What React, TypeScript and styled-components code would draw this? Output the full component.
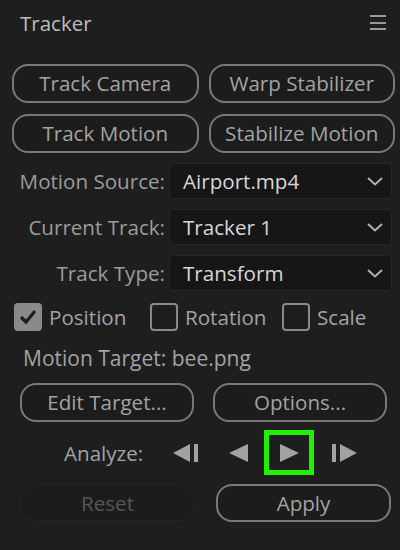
import React from "react";
import styled, { createGlobalStyle } from "styled-components";

const FS = 20.6;

const Global = createGlobalStyle`
  html, body { margin: 0; padding: 0; background: #1e1e1e; }
  body { font-family: "Open Sans", "Noto Sans", sans-serif; }
  * { box-sizing: border-box; }
`;

const Panel = styled.div`
  width: 400px;
  height: 550px;
  background: #1e1e1e;
  display: flex;
  flex-direction: column;
  overflow: hidden;
`;

const Header = styled.div`
  height: 46px;
  display: flex;
  align-items: center;
  justify-content: space-between;
  padding: 0 14px 0 20px;
`;

const Title = styled.div`
  font-size: 20.5px;
  color: #bdbdbd;
  line-height: 1;
`;

const Hamburger = styled.div`
  width: 16px;
  display: flex;
  flex-direction: column;
  gap: 4.5px;
  margin-top: -1px;
  span {
    display: block;
    height: 2px;
    background: #9a9a9a;
  }
`;

const ButtonGrid = styled.div<{ $top: number; $left: number; $right: number; $gap: number; $rowGap?: number }>`
  display: grid;
  grid-template-columns: 1fr 1fr;
  column-gap: ${(p) => p.$gap}px;
  row-gap: ${(p) => p.$rowGap ?? 0}px;
  margin-top: ${(p) => p.$top}px;
  padding: 0 ${(p) => p.$right}px 0 ${(p) => p.$left}px;
`;

const PillButton = styled.button<{ $h?: number; $disabled?: boolean }>`
  height: ${(p) => p.$h ?? 39}px;
  border: 2px solid ${(p) => (p.$disabled ? "#212121" : "#787878")};
  border-radius: 16px;
  background: #1c1c1c;
  color: ${(p) => (p.$disabled ? "#565656" : "#a3a3a3")};
  font-family: "Open Sans", "Noto Sans", sans-serif;
  font-size: ${FS}px;
  display: flex;
  align-items: center;
  justify-content: center;
  padding: 0;
  line-height: 1;
  white-space: nowrap;
`;

const Form = styled.div`
  display: grid;
  grid-template-columns: 1fr 223px;
  column-gap: 4px;
  row-gap: 10px;
  margin-top: 10px;
  padding-right: 8px;
`;

const Label = styled.div`
  font-size: ${FS}px;
  color: #9c9c9c;
  text-align: right;
  display: flex;
  align-items: center;
  justify-content: flex-end;
  white-space: nowrap;
`;

const Select = styled.div`
  height: 36px;
  background: #161616;
  border: 1px solid #262626;
  border-radius: 4px;
  display: flex;
  align-items: center;
  justify-content: space-between;
  padding: 0 8px 0 13px;
  font-size: ${FS}px;
  color: #d6d6d6;
`;

const CheckRow = styled.div`
  display: flex;
  align-items: center;
  margin-top: 12px;
  padding-left: 14px;
  height: 28px;
`;

const CheckItem = styled.label<{ $w: number }>`
  display: flex;
  align-items: center;
  gap: 7px;
  width: ${(p) => p.$w}px;
  font-size: ${FS}px;
  color: #a3a3a3;
`;

const Box = styled.span<{ $checked?: boolean }>`
  width: 28px;
  height: 28px;
  border-radius: 4px;
  flex: none;
  display: flex;
  align-items: center;
  justify-content: center;
  background: ${(p) => (p.$checked ? "#8a8a8a" : "transparent")};
  border: ${(p) => (p.$checked ? "none" : "2.5px solid #8a8a8a")};
`;

const TargetText = styled.div`
  margin-top: 14px;
  padding-left: 23px;
  height: 26px;
  display: flex;
  align-items: center;
  font-size: ${FS + 0.4}px;
  color: #a3a3a3;
`;

const AnalyzeRow = styled.div`
  display: flex;
  align-items: center;
  margin-top: 8px;
  height: 45px;
  padding-left: 64px;
`;

const AnalyzeLabel = styled.div`
  font-size: ${FS}px;
  color: #a3a3a3;
  width: 109px;
`;

const IconSlot = styled.div<{ $w: number; $active?: boolean }>`
  width: ${(p) => p.$w}px;
  height: 45px;
  display: flex;
  align-items: center;
  justify-content: center;
  border: ${(p) => (p.$active ? "5px solid #22f000" : "none")};
`;

const Chevron = () => (
  <svg width="16" height="9" viewBox="0 0 16 9">
    <polyline points="1,1 8,7.5 15,1" fill="none" stroke="#b0b0b0" strokeWidth="2" />
  </svg>
);

const Check = () => (
  <svg width="20" height="18" viewBox="0 0 20 18">
    <polyline points="3,9 8,14 17,3" fill="none" stroke="#1e1e1e" strokeWidth="3.2" />
  </svg>
);

const G = "#a2a2a2";

const StepBack = () => (
  <svg width="25" height="18" viewBox="0 0 25 18">
    <polygon points="0,9 17,0 17,18" fill={G} />
    <rect x="21" y="0" width="4" height="18" fill={G} />
  </svg>
);
const Back = () => (
  <svg width="19" height="18" viewBox="0 0 19 18">
    <polygon points="0,9 19,0 19,18" fill={G} />
  </svg>
);
const Play = () => (
  <svg width="19" height="18" viewBox="0 0 19 18">
    <polygon points="19,9 0,0 0,18" fill={G} />
  </svg>
);
const StepFwd = () => (
  <svg width="25" height="18" viewBox="0 0 25 18">
    <rect x="0" y="0" width="4" height="18" fill={G} />
    <polygon points="25,9 8,0 8,18" fill={G} />
  </svg>
);

const Gap = styled.div<{ $w: number }>`
  width: ${(p) => p.$w}px;
  flex: none;
`;

export default function App() {
  return (
    <>
      <Global />
      <Panel>
        <Header>
          <Title>Tracker</Title>
          <Hamburger>
            <span />
            <span />
            <span />
          </Hamburger>
        </Header>

        <ButtonGrid $top={18} $left={12} $right={5} $gap={10} $rowGap={11}>
          <PillButton>Track Camera</PillButton>
          <PillButton>Warp Stabilizer</PillButton>
          <PillButton>Track Motion</PillButton>
          <PillButton>Stabilize Motion</PillButton>
        </ButtonGrid>

        <Form>
          <Label>Motion Source:</Label>
          <Select>
            Airport.mp4
            <Chevron />
          </Select>
          <Label>Current Track:</Label>
          <Select>
            Tracker 1
            <Chevron />
          </Select>
          <Label>Track Type:</Label>
          <Select>
            Transform
            <Chevron />
          </Select>
        </Form>

        <CheckRow>
          <CheckItem $w={136}>
            <Box $checked>
              <Check />
            </Box>
            Position
          </CheckItem>
          <CheckItem $w={132}>
            <Box />
            Rotation
          </CheckItem>
          <CheckItem $w={90}>
            <Box />
            Scale
          </CheckItem>
        </CheckRow>

        <TargetText>Motion Target: bee.png</TargetText>

        <ButtonGrid $top={12} $left={20} $right={13} $gap={19}>
          <PillButton>Edit Target...</PillButton>
          <PillButton>Options...</PillButton>
        </ButtonGrid>

        <AnalyzeRow>
          <AnalyzeLabel>Analyze:</AnalyzeLabel>
          <IconSlot $w={25}>
            <StepBack />
          </IconSlot>
          <Gap $w={31} />
          <IconSlot $w={19}>
            <Back />
          </IconSlot>
          <Gap $w={16} />
          <IconSlot $w={50} $active>
            <Play />
          </IconSlot>
          <Gap $w={18} />
          <IconSlot $w={25}>
            <StepFwd />
          </IconSlot>
        </AnalyzeRow>

        <ButtonGrid $top={9} $left={20} $right={9} $gap={21}>
          <PillButton $h={38} $disabled>
            Reset
          </PillButton>
          <PillButton $h={38}>Apply</PillButton>
        </ButtonGrid>
      </Panel>
    </>
  );
}
